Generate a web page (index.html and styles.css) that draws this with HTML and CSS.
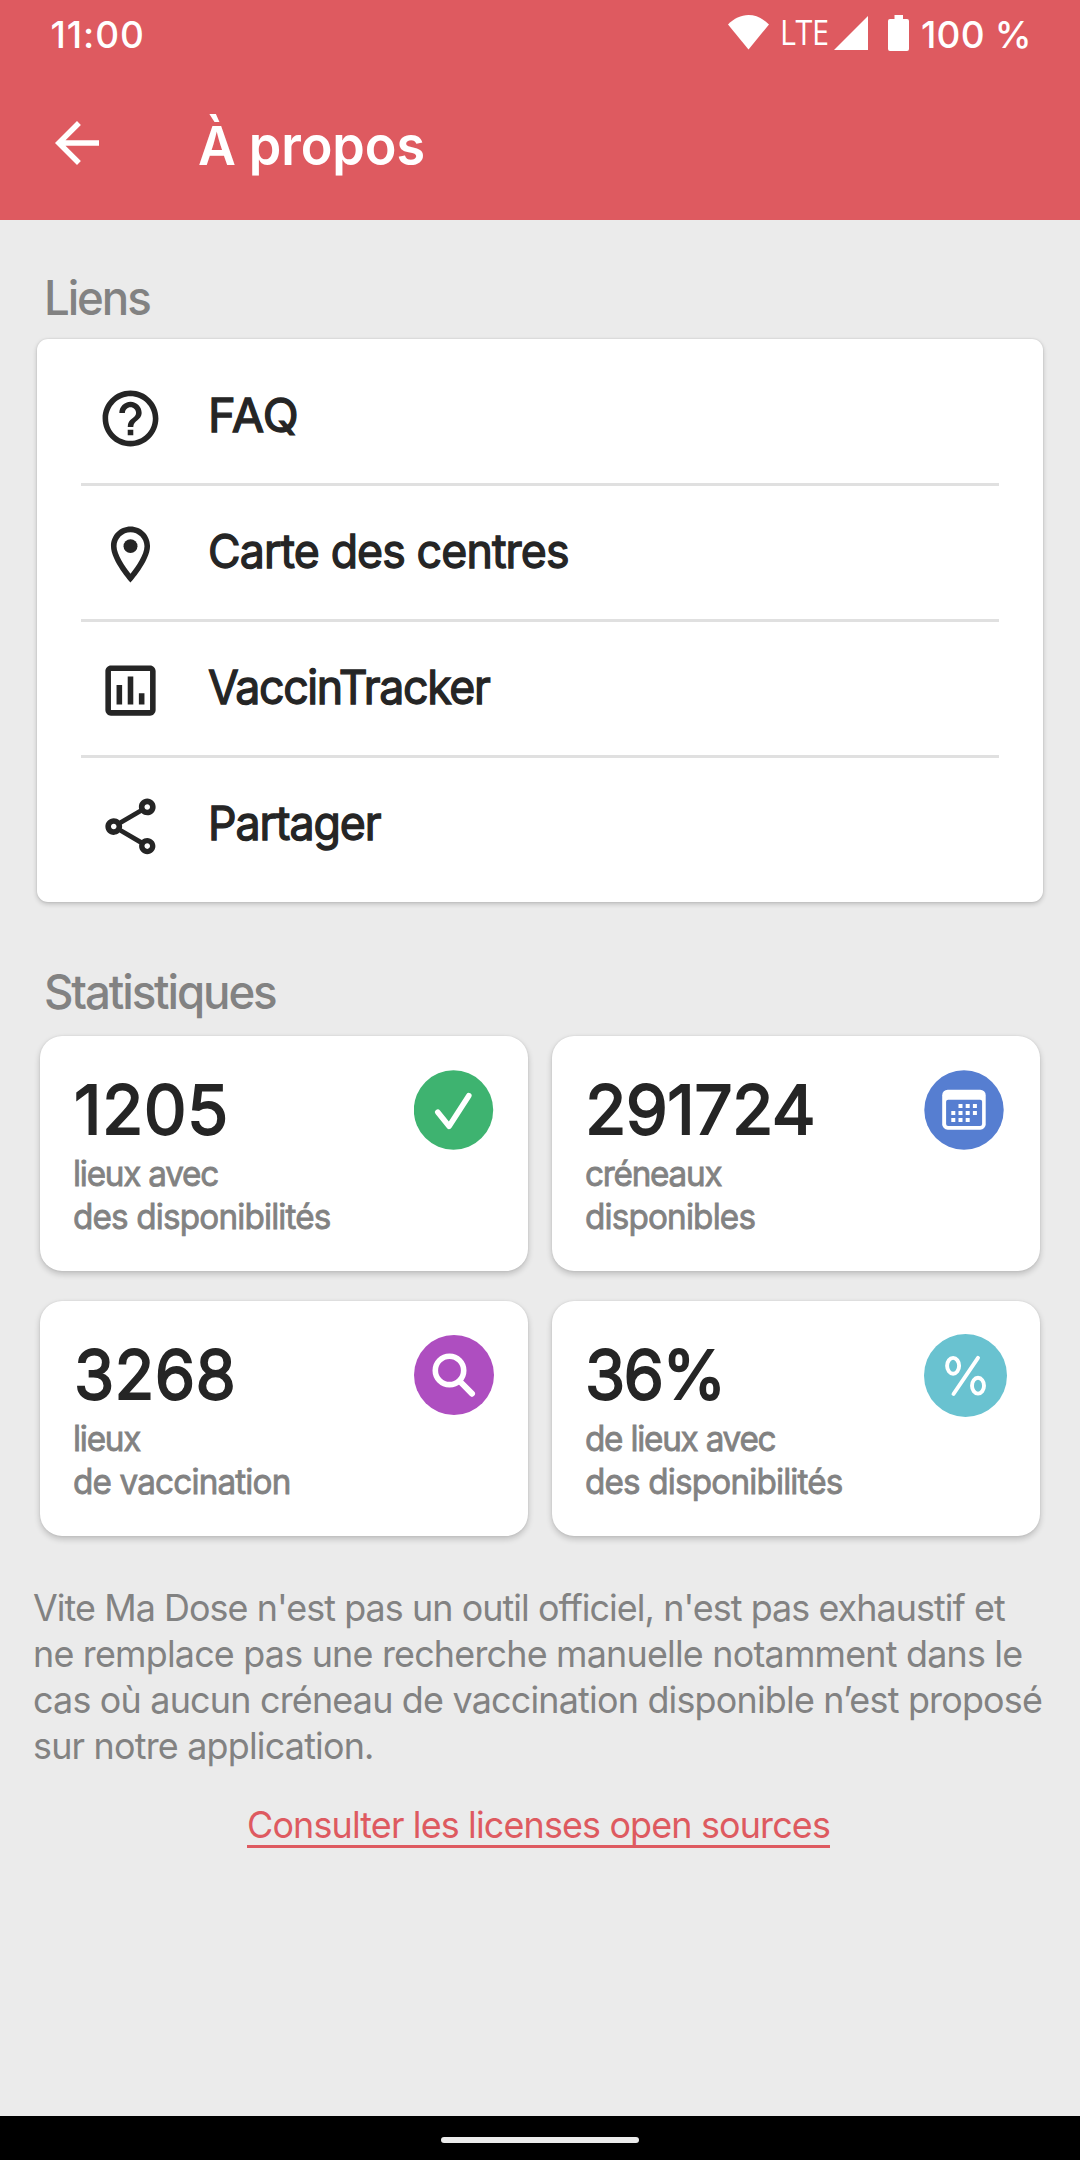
FILE: index.html
```
<!DOCTYPE html>
<html lang="fr">
<head>
<meta charset="utf-8">
<meta name="viewport" content="width=device-width">
<title>À propos</title>
<link rel="stylesheet" href="styles.css">
</head>
<body>
<div class="screen">
  <header class="header">
    <div class="status">
      <span class="status-time">11:00</span>
      <div class="status-right">
        <svg class="wifi" width="41" height="35" viewBox="0 0 41 35"><path d="M20.500 34.500L0 9.500C6 3.500 13 0 20.500 0S35 3.500 41 9.500z" fill="#fff"/></svg>
        <span class="status-net">LTE</span>
        <svg class="signal" width="34" height="34" viewBox="0 0 34 34"><path d="M34 0v34H0z" fill="#fff"/></svg>
        <svg class="battery" width="21" height="36" viewBox="0 0 21 36"><path d="M6.500 0h8.500v4h4a2 2 0 0 1 2 2v28a2 2 0 0 1-2 2H2a2 2 0 0 1-2-2V6a2 2 0 0 1 2-2h4.500z" fill="#fff"/></svg>
        <span class="status-level">100 %</span>
      </div>
    </div>
    <div class="toolbar">
      <svg class="back" width="66" height="66" viewBox="0 0 24 24"><path d="M20 11H7.830l5.590-5.590L12 4l-8 8 8 8 1.410-1.410L7.830 13H20z" fill="#fff"/></svg>
      <h1 class="title">À propos</h1>
    </div>
  </header>

  <main class="content">
    <h2 class="section-title">Liens</h2>
    <nav class="links">
      <a class="link-row">
        <svg class="link-icon" viewBox="0 0 24 24"><path d="M11 18h2v-2h-2v2zm1-16C6.480 2 2 6.480 2 12s4.480 10 10 10 10-4.480 10-10S17.520 2 12 2zm0 18c-4.410 0-8-3.590-8-8s3.590-8 8-8 8 3.590 8 8-3.590 8-8 8zm0-14c-2.210 0-4 1.790-4 4h2c0-1.100.900-2 2-2s2 .900 2 2c0 2-3 1.750-3 5h2c0-2.250 3-2.500 3-5 0-2.210-1.790-4-4-4z"/></svg>
        <span class="link-label label-wide">FAQ</span>
      </a>
      <a class="link-row">
        <svg class="link-icon" viewBox="0 0 24 24"><path d="M12 2C8.130 2 5 5.130 5 9c0 5.250 7 13 7 13s7-7.750 7-13c0-3.870-3.130-7-7-7zM7 9c0-2.760 2.240-5 5-5s5 2.240 5 5c0 2.880-2.880 7.190-5 9.880C9.920 16.210 7 11.850 7 9z"/><circle cx="12" cy="9" r="2.500"/></svg>
        <span class="link-label">Carte des centres</span>
      </a>
      <a class="link-row">
        <svg class="link-icon" viewBox="0 0 24 24"><path d="M9 17H7v-7h2v7zm4 0h-2V7h2v10zm4 0h-2v-4h2v4zm2 2H5V5h14v14zm0-16H5c-1.100 0-2 .900-2 2v14c0 1.100.900 2 2 2h14c1.100 0 2-.900 2-2V5c0-1.100-.900-2-2-2z"/></svg>
        <span class="link-label label-tight">VaccinTracker</span>
      </a>
      <a class="link-row">
        <svg class="link-icon" viewBox="0 0 24 24"><path d="M18 16.080c-.760 0-1.440.300-1.960.770L8.910 12.700c.050-.230.090-.460.090-.700s-.040-.470-.090-.700l7.050-4.110c.540.500 1.250.810 2.040.810 1.660 0 3-1.340 3-3s-1.340-3-3-3-3 1.340-3 3c0 .240.040.470.090.700L8.040 9.810C7.500 9.310 6.790 9 6 9c-1.660 0-3 1.340-3 3s1.340 3 3 3c.790 0 1.500-.310 2.040-.810l7.120 4.160c-.050.210-.080.430-.080.650 0 1.610 1.310 2.920 2.920 2.920s2.920-1.310 2.920-2.920-1.310-2.920-2.920-2.920zM18 4c.550 0 1 .450 1 1s-.450 1-1 1-1-.450-1-1 .450-1 1-1zM6 13c-.550 0-1-.450-1-1s.450-1 1-1 1 .450 1 1-.450 1-1 1zm12 7.020c-.550 0-1-.450-1-1s.450-1 1-1 1 .450 1 1-.450 1-1 1z"/></svg>
        <span class="link-label label-snug">Partager</span>
      </a>
    </nav>

    <h2 class="section-title section-stats">Statistiques</h2>
    <section class="stats">
      <article class="stat">
        <div class="stat-head">
          <span class="stat-value value-first">1205</span>
          <svg class="stat-icon" width="80" height="80" viewBox="0 0 80 80"><circle cx="39.500" cy="40" r="39.700" fill="#3eb370"/><path d="M23.800 42.300l11.300 14 19.700-30.600" fill="none" stroke="#fff" stroke-width="5.600" stroke-linecap="round" stroke-linejoin="round"/></svg>
        </div>
        <p class="stat-text"><span class="text-tight">lieux avec</span><br>des disponibilités</p>
      </article>
      <article class="stat">
        <div class="stat-head">
          <span class="stat-value value-long">291724</span>
          <svg class="stat-icon icon-even" width="80" height="80" viewBox="0 0 80 80"><circle cx="40" cy="40" r="39.700" fill="#567ed1"/><rect x="18.200" y="19.700" width="43.500" height="40" rx="5.500" fill="#fff"/><rect x="22.100" y="29.700" width="36" height="26.300" rx="2" fill="#567ed1"/><path d="M34.500 34h4v4h-4zM41.700 34h4v4h-4zM48.900 34h4v4h-4zM27.300 41h4v4h-4zM34.500 41h4v4h-4zM41.700 41h4v4h-4zM48.900 41h4v4h-4zM27.300 48h4v4h-4zM34.500 48h4v4h-4zM41.700 48h4v4h-4z" fill="#fff"/></svg>
        </div>
        <p class="stat-text"><span class="text-tight">créneaux</span><br>disponibles</p>
      </article>
      <article class="stat">
        <div class="stat-head">
          <span class="stat-value value-snug">3268</span>
          <svg class="stat-icon" width="80" height="80" viewBox="0 0 80 80"><circle cx="40" cy="40" r="40" fill="#ae4ec0"/><circle cx="35.500" cy="35.400" r="14.200" fill="none" stroke="#fff" stroke-width="5.600"/><path d="M46 46.500L58 58.700" stroke="#fff" stroke-width="6" stroke-linecap="round"/></svg>
        </div>
        <p class="stat-text"><span class="text-tight">lieux</span><br>de vaccination</p>
      </article>
      <article class="stat">
        <div class="stat-head">
          <span class="stat-value value-tight">36%</span>
          <svg class="stat-icon icon-large" width="83" height="83" viewBox="0 0 83 83"><circle cx="41.500" cy="41.500" r="41.500" fill="#69c2d0"/><g fill="none" stroke="#fff" stroke-width="3.900" stroke-linecap="round"><ellipse cx="29.100" cy="31.800" rx="6" ry="7.900"/><ellipse cx="54" cy="51.700" rx="6" ry="7.900"/><path d="M54 23.800L29.500 60"/></g></svg>
        </div>
        <p class="stat-text"><span class="text-tight">de lieux avec</span><br>des disponibilités</p>
      </article>
    </section>

    <p class="notice"><span class="notice-first">Vite Ma Dose n'est pas un outil officiel, n'est pas exhaustif et</span><br>ne remplace pas une recherche manuelle notamment dans le<br>cas où aucun créneau de vaccination disponible n’est proposé<br>sur notre application.</p>
    <a class="licenses">Consulter les licenses open sources</a>
  </main>

  <footer class="navbar"><div class="handle"></div></footer>
</div>
</body>
</html>
```
FILE: styles.css
```
* { box-sizing: border-box; margin: 0; padding: 0; }

body {
  background: #ebebeb;
  font-family: Inter, "Liberation Sans", sans-serif;
}

svg { display: block; flex: none; }

.screen {
  display: flex;
  flex-direction: column;
  width: 1080px;
  height: 2160px;
  overflow: hidden;
}

.header {
  height: 220px;
  background: #de5a60;
  color: #fff;
}

.status {
  display: flex;
  justify-content: space-between;
  height: 70px;
  padding: 0 49px 0 50.500px;
}

.status-time,
.status-level {
  font-size: 37px;
  font-weight: 500;
  line-height: 69px;
  white-space: nowrap;
}

.status-time { letter-spacing: 0.9px; }
.status-level { width: 110px; margin-left: 12px; letter-spacing: 0.2px; }

.status-right { display: flex; }
.wifi { margin-top: 15px; }

.status-net {
  width: 50px;
  margin-left: 11px;
  font: 400 34px/65px "Open Sans", sans-serif;
  letter-spacing: -0.500px;
  transform: scaleX(0.9);
  transform-origin: left;
}

.signal { margin: 15.500px 0 0 4px; }
.battery { margin: 15px 0 0 20px; }

.toolbar {
  display: flex;
  height: 150px;
  padding-left: 44px;
}

.back { margin-top: 40px; }

.title {
  margin-left: 88px;
  font-size: 54px;
  font-weight: 600;
  line-height: 151px;
  letter-spacing: -0.100px;
  transform: scaleX(0.965);
  transform-origin: left;
}

.content {
  display: flex;
  flex: 1;
  flex-direction: column;
  padding-top: 48.500px;
}

.section-title {
  height: 58px;
  margin: 0 0 12.500px 43.500px;
  color: #828282;
  font-size: 48px;
  font-weight: 550;
  line-height: 58px;
  letter-spacing: -2.200px;
  transform: scaleX(0.95);
  transform-origin: left;
}

.section-stats { margin: 61px 0 15px 43.500px; }

.links {
  height: 563px;
  margin: 0 37px;
  padding: 11px 44px;
  border-radius: 11px;
  background: #fff;
  box-shadow: 0 2px 5px rgba(0, 0, 0, 0.2), 0 0 2px rgba(0, 0, 0, 0.12);
}

.link-row {
  display: flex;
  align-items: center;
  gap: 44px;
  height: 136px;
  padding-left: 16px;
  border-bottom: 3px solid #e0e0e0;
}

.link-row:last-child { border-bottom-color: transparent; }

.link-icon {
  width: 67px;
  height: 67px;
  margin-top: 4px;
  fill: #252525;
}

.link-label {
  padding-bottom: 4px;
  color: #252525;
  font-size: 47px;
  line-height: 58px;
  letter-spacing: -0.930px;
  -webkit-text-stroke: 1.300px #252525;
  transform: scaleX(0.95);
  transform-origin: left;
}

.label-wide { letter-spacing: 0.200px; transform: none; }
.label-snug { letter-spacing: -1.150px; }
.label-tight { letter-spacing: -1.400px; }

.stats {
  display: grid;
  grid-template-columns: 488px 488px;
  gap: 30px 24px;
  padding-left: 40px;
}

.stat {
  height: 235px;
  padding: 33px 34px 0 33px;
  border-radius: 22px;
  background: #fff;
  box-shadow: 0 3px 6px rgba(0, 0, 0, 0.2), 0 0 2px rgba(0, 0, 0, 0.1);
}

.stat-head {
  display: flex;
  justify-content: space-between;
  height: 80px;
}

.stat-value {
  color: #252525;
  font-size: 68px;
  line-height: 80px;
  -webkit-text-stroke: 1.800px #252525;
  transform-origin: left;
}

.value-first { padding-left: 1px; letter-spacing: 0.300px; }
.value-long { letter-spacing: -0.700px; }
.value-snug { padding-left: 1px; letter-spacing: 0.300px; transform: scaleX(0.96); }
.value-tight { letter-spacing: -1.800px; transform: scaleX(0.96); }

.stat-icon { margin-top: 1px; }
.icon-even { margin-right: 2px; }
.icon-large { margin: 0 -1px 0 0; }

.stat-text {
  margin-top: 2.500px;
  color: #828282;
  font-size: 35px;
  line-height: 43px;
  letter-spacing: -0.880px;
  -webkit-text-stroke: 0.800px #828282;
  white-space: nowrap;
  transform: scaleX(0.95);
  transform-origin: left;
}

.text-tight { letter-spacing: -1.300px; }

.notice {
  margin: 48.500px 0 0 32.500px;
  color: #828282;
  font-size: 37px;
  line-height: 46px;
  letter-spacing: -0.820px;
  white-space: nowrap;
  transform: scaleX(0.97);
  transform-origin: left;
}

.notice-first { letter-spacing: -0.970px; }

.licenses {
  align-self: center;
  height: 49px;
  margin: 30px 2px 0 0;
  border-bottom: 3px solid #de5a60;
  color: #de5a60;
  font-size: 37px;
  line-height: 52px;
  letter-spacing: -0.870px;
  transform: scaleX(0.97);
}

.navbar {
  display: flex;
  justify-content: center;
  height: 44px;
  padding-top: 21px;
  background: #000;
}

.handle {
  width: 198px;
  height: 6px;
  border-radius: 3px;
  background: #ebebeb;
}
```
